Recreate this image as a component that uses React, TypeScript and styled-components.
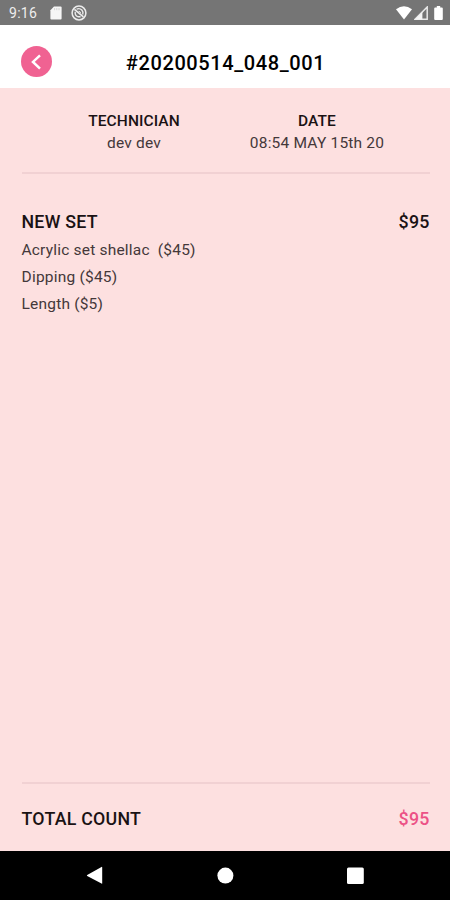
import styled, { createGlobalStyle } from "styled-components";

type Service = {
    name: string;
    spacing: number;
}

const services: Service[] = [
    { name: "Acrylic set shellac  ($45)", spacing: 0.2 },
    { name: "Dipping ($45)", spacing: 0.22 },
    { name: "Length ($5)", spacing: 0.2 },
]

const App = () => {
    return (
        <Screen>
            <GlobalStyle />
            <StatusBar>
                <Clock>9:16</Clock>
                <SdIcon width="12" height="14" viewBox="0 0 12 14">
                    <path d="M4 0.5h6.6q1 0 1 1v11q0 1-1 1H1.4q-1 0-1-1V4.2z" fill="#f6f6f6" />
                    <path d="M4.6 2v2.2M6.8 2v2.2M9 2v2.2" stroke="#c9c9c9" strokeWidth="0.8" />
                </SdIcon>
                <svg width="16" height="16" viewBox="0 0 16 16" fill="none" stroke="#ececec">
                    <circle cx="8" cy="8" r="6.9" strokeWidth="1.5" />
                    <path d="M3.4 4.4l9 7.4" strokeWidth="1.7" />
                    <path d="M5.6 4.2q3-1.4 5.2 0.8q1.8 2 0.9 4.4M4.2 6.8q-0.4 3.6 2.6 4.8q1.4 0.4 2.8 0" strokeWidth="1.4" />
                    <path d="M7.6 6.4q2 0 2 1.8" strokeWidth="1" />
                </svg>
                <Signals>
                    <svg width="16" height="14" viewBox="0 0 16 14">
                        <path d="M0 3.2Q8-2.8 16 3.2L8 13.6z" fill="#fff" />
                    </svg>
                    <svg width="14" height="14" viewBox="0 0 14 14">
                        <path d="M13.2 1v12.2H1.2z" fill="none" stroke="#e8e8e8" strokeWidth="1.5" />
                        <path d="M8.4 6v7.4H1z" fill="#f4f4f4" />
                    </svg>
                    <Battery width="9" height="14" viewBox="0 0 9 14">
                        <path d="M2.8 0h3.4v1.4h1.6q1 0 1 1V13q0 1-1 1H1.2q-1 0-1-1V2.4q0-1 1-1h1.6z" fill="#fff" />
                    </Battery>
                </Signals>
            </StatusBar>

            <Header>
                <BackButton aria-label="Back">
                    <svg width="31" height="31" viewBox="0 0 31 31">
                        <path d="M19 9.4L12 15.9L19 22.6" fill="none" stroke="#fff" strokeWidth="2.5" />
                    </svg>
                </BackButton>
                <Title>#20200514_048_001</Title>
            </Header>

            <Content>
                <Info>
                    <InfoItem $width={92}>
                        <Label>TECHNICIAN</Label>
                        <Value>dev dev</Value>
                    </InfoItem>
                    <InfoItem $width={136}>
                        <Label>DATE</Label>
                        <Value>08:54 MAY 15th 20</Value>
                    </InfoItem>
                </Info>

                <SetRow>
                    <Heading>NEW SET</Heading>
                    <Price>$95</Price>
                </SetRow>
                <ServiceList>
                    {services.map((item) => (
                        <ServiceItem key={item.name} $spacing={item.spacing}>{item.name}</ServiceItem>
                    ))}
                </ServiceList>

                <TotalRow>
                    <Heading>TOTAL COUNT</Heading>
                    <Price $pink>$95</Price>
                </TotalRow>
            </Content>

            <NavBar>
                <svg width="20" height="20" viewBox="0 0 20 20">
                    <path d="M17.2 2.4v15.8q0 .8-.7.4L2.2 11q-.7-.5 0-1L16.5 2q.7-.4.7.4z" fill="#fff" />
                </svg>
                <svg width="20" height="20" viewBox="0 0 20 20">
                    <circle cx="10.4" cy="10.6" r="8" fill="#fff" />
                </svg>
                <svg width="20" height="20" viewBox="0 0 20 20">
                    <rect x="2" y="2.4" width="16.8" height="16.6" rx="1.5" fill="#fff" />
                </svg>
            </NavBar>
        </Screen>
    )
}
export default App;


const GlobalStyle = createGlobalStyle`
  body {
    margin: 0;
  }
  * {
    box-sizing: border-box;
  }
`;
const Screen = styled.div`
    display: flex;
    flex-direction: column;
    width: 450px;
    height: 900px;
    overflow: hidden;
    background: #fde0e0;
    color: #1a1214;
    font-family: Roboto, "Liberation Sans", sans-serif;
`;
const StatusBar = styled.div`
    display: flex;
    align-items: center;
    height: 25px;
    padding: 1px 7px 0 9px;
    background: #757575;
`;
const Clock = styled.span`
    width: 41px;
    color: #eee;
    font-size: 14px;
    letter-spacing: 0.3px;
`;
const SdIcon = styled.svg`
    margin-right: 9px;
`;
const Signals = styled.div`
    display: flex;
    align-items: center;
    gap: 2px;
    margin-left: auto;
`;
const Battery = styled.svg`
    margin-left: 4px;
`;
const Header = styled.header`
    display: flex;
    align-items: flex-start;
    height: 63px;
    padding: 21px 21px 0;
    background: #fff;
`;
const BackButton = styled.button`
    display: flex;
    width: 31px;
    height: 31px;
    padding: 0;
    border: 0;
    border-radius: 50%;
    background: #f06292;
`;
const Title = styled.h1`
    flex: 1;
    margin: 5px 31px 0 0;
    padding-left: 1px;
    text-align: center;
    font-size: 20px;
    font-weight: 500;
    line-height: 24px;
    letter-spacing: 0.6px;
    white-space: nowrap;
    color: #000;
`;
const Content = styled.main`
    flex: 1;
    display: flex;
    flex-direction: column;
    padding: 0 20.5px 0 21.5px;
`;
const Info = styled.section`
    display: flex;
    gap: 69px;
    height: 86px;
    padding: 22px 0 0 66.5px;
    border-bottom: 2px solid #f1d1d3;
`;
const InfoItem = styled.div<{ $width: number }>`
    width: ${(p) => p.$width}px;
    text-align: center;
    white-space: nowrap;
`;
const Label = styled.div`
    margin: 0 -4px;
    font-size: 15.5px;
    font-weight: 500;
    line-height: 22px;
    letter-spacing: 0.1px;
`;
const Value = styled.div`
    font-size: 15.5px;
    line-height: 22px;
    letter-spacing: 0.2px;
    color: #44383a;
`;
const SetRow = styled.div`
    display: flex;
    justify-content: space-between;
    margin-top: 36px;
`;
const Heading = styled.h2`
    margin: 0;
    font-size: 17.8px;
    font-weight: 500;
    line-height: 24px;
    letter-spacing: 0.25px;
`;
const Price = styled.span<{ $pink?: boolean }>`
    font-size: 17.8px;
    font-weight: 500;
    line-height: 24px;
    letter-spacing: 0.2px;
    color: ${(p) => (p.$pink ? "#ec5286" : "#1a1214")};
`;
const ServiceList = styled.ul`
    margin: 3px 0 0;
    padding: 0;
    list-style: none;
`;
const ServiceItem = styled.li<{ $spacing: number }>`
    font-size: 15.5px;
    line-height: 27px;
    letter-spacing: ${(p) => p.$spacing}px;
    white-space: pre;
    color: #44383a;
`;
const TotalRow = styled.footer`
    display: flex;
    justify-content: space-between;
    height: 69px;
    margin-top: auto;
    padding-top: 23px;
    border-top: 2px solid #f1d1d3;
`;
const NavBar = styled.nav`
    display: flex;
    align-items: flex-start;
    justify-content: space-between;
    height: 49px;
    padding: 14px 85px 0 85px;
    background: #000;
`;
